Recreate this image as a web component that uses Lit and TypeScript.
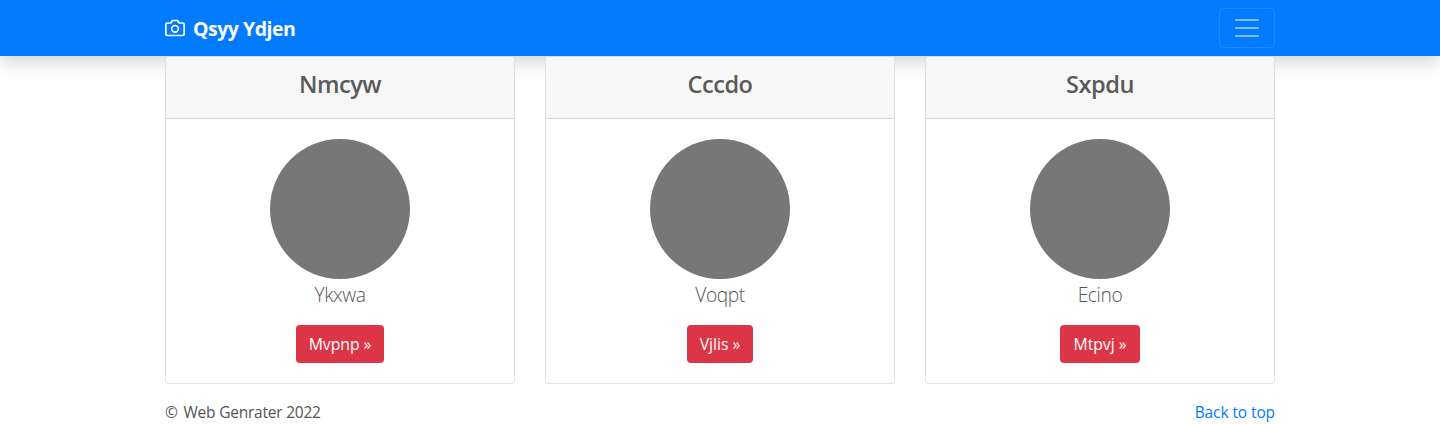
import { LitElement, html, css, svg } from "lit";
import { customElement, property } from "lit/decorators.js";

@customElement("person-card")
class PersonCard extends LitElement {
  @property() heading = "";
  @property() name = "";
  @property() action = "";

  static styles = css`
    :host { display: block; }
    .card { box-sizing: border-box; height: 328px; border: 1px solid #dfdfdf; border-radius: 4px; background: #fff; text-align: center; overflow: hidden; }
    .header { box-sizing: border-box; height: 62px; padding-top: 11px; background: #f7f7f7; border-bottom: 1px solid #d8d8d8; }
    h4 { margin: 0; font: 600 23.6px/32px "Open Sans", "Noto Sans", sans-serif; letter-spacing: -.5px; color: #5a5a5a; }
    .body { padding-top: 20px; display: flex; flex-direction: column; align-items: center; }
    .avatar { width: 140px; height: 140px; border-radius: 50%; background: #777; }
    .lead { margin: 0; font: 300 19.2px/30px "Open Sans", sans-serif; letter-spacing: -.4px; height: 46px; padding-top: 1px; box-sizing: border-box; white-space: nowrap; }
    .button { display: flex; box-sizing: border-box; height: 38px; padding: 7px var(--action-padding, 13px); border-radius: 4px; background: #dc3545; color: #fff; font: 400 15.8px/25px "Open Sans", sans-serif; letter-spacing: -.05px; text-decoration: none; white-space: nowrap; }
  `;
  render() {
    return html`<article class="card">
      <header class="header"><h4>${this.heading}</h4></header>
      <div class="body">
        <div class="avatar"></div>
        <p class="lead">${this.name}</p>
        <a class="button" href="#">${this.action} »</a>
      </div>
    </article>`;
  }
}

const camera = svg`<path d="M23 19a2 2 0 0 1-2 2H3a2 2 0 0 1-2-2V8a2 2 0 0 1 2-2h4l2-3h6l2 3h4a2 2 0 0 1 2 2z"/><circle cx="12" cy="13" r="4"/>`;

@customElement("app-root")
class AppRoot extends LitElement {
  static styles = css`
    :host { display: block; height: 424px; overflow: hidden; color: #555; background: #fff; font: 400 16px/24px "Open Sans", "Noto Sans", sans-serif; }
    .container { width: 1110px; margin: 0 auto; }
    .navbar { height: 56px; background: #007bff; box-shadow: 0 8px 16px rgba(0,0,0,.15); }
    .bar { height: 56px; display: flex; align-items: center; justify-content: space-between; }
    .brand { display: flex; align-items: center; color: #fff; font-size: 19.5px; line-height: 30px; font-weight: 700; letter-spacing: -.5px; text-decoration: none; white-space: nowrap; }
    .brand span { padding-top: 2px; }
    .camera { width: 20px; height: 20px; margin-right: 8px; fill: none; stroke: #fff; stroke-width: 2; stroke-linecap: round; stroke-linejoin: round; }
    .toggle { width: 56px; height: 40px; box-sizing: border-box; padding: 4px 12px; border: 1px solid rgba(255,255,255,.1); border-radius: 4px; background: transparent; }
    .toggle svg { display: block; width: 30px; height: 30px; stroke: rgba(255,255,255,.5); stroke-width: 2; stroke-linecap: round; }
    .cards { display: grid; grid-template-columns: repeat(3, 350px); gap: 30px; position: relative; }
    .cards person-card:last-child { --action-padding: 13.7px; }
    .footer { display: flex; justify-content: space-between; padding-top: 16px; font-size: 15.5px; letter-spacing: -.22px; }
    .mark { margin-right: 2px; }
    .footer a { color: #007bff; text-decoration: none; letter-spacing: -.1px; }
  `;
  render() {
    return html`<header class="navbar"><div class="container bar">
      <a class="brand" href="#"><svg class="camera" viewBox="0 0 24 24">${camera}</svg><span>Qsyy Ydjen</span></a>
      <button class="toggle" aria-label="Toggle navigation"><svg viewBox="0 0 30 30"><path d="M4 7h22M4 15h22M4 23h22"/></svg></button>
    </div></header>
    <main class="container cards">
      <person-card heading="Nmcyw" name="Ykxwa" action="Mvpnp"></person-card>
      <person-card heading="Cccdo" name="Voqpt" action="Vjlis"></person-card>
      <person-card heading="Sxpdu" name="Ecino" action="Mtpvj"></person-card>
    </main>
    <footer class="container footer"><span><span class="mark">©</span> Web Genrater 2022</span><a href="#">Back to top</a></footer>`;
  }
}
